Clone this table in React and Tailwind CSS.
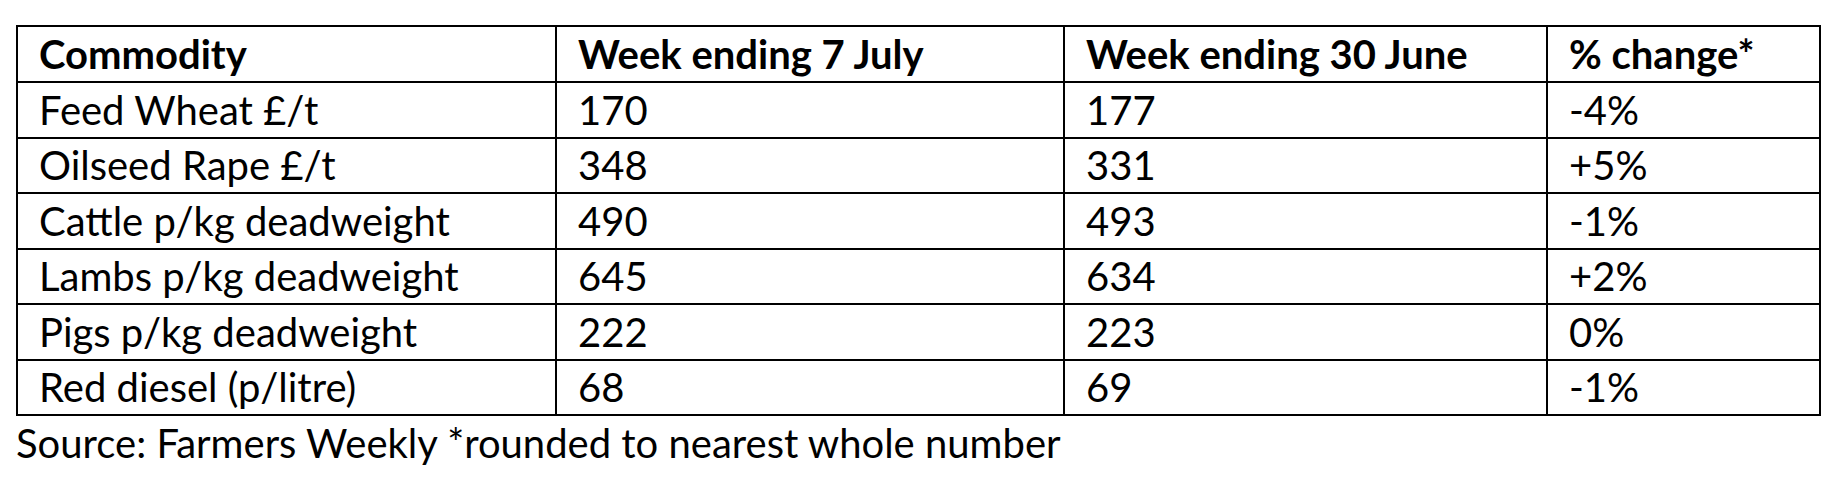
import React from "react";

const rows = [
  ["Feed Wheat £/t", "170", "177", "-4%"],
  ["Oilseed Rape £/t", "348", "331", "+5%"],
  ["Cattle p/kg deadweight", "490", "493", "-1%"],
  ["Lambs p/kg deadweight", "645", "634", "+2%"],
  ["Pigs p/kg deadweight", "222", "223", "0%"],
  ["Red diesel (p/litre)", "68", "69", "-1%"],
];

const headers = ["Commodity", "Week ending 7 July", "Week ending 30 June", "% change*"];

export default function App() {
  return (
    <div
      className="w-[1833px] h-[489px] bg-white text-black"
      style={{ fontFamily: "Lato, 'Open Sans', sans-serif" }}
    >
      <div className="pt-[25px] pl-[16px]">
        <table className="table-fixed border-collapse w-[1803px] text-[40px] leading-none">
          <colgroup>
            <col className="w-[539px]" />
            <col className="w-[508px]" />
            <col className="w-[483px]" />
            <col className="w-[273px]" />
          </colgroup>
          <thead>
            <tr className="h-[56px]">
              {headers.map((h) => (
                <th
                  key={h}
                  className="border-2 border-black text-left font-bold pl-[21px] align-middle whitespace-nowrap"
                >
                  {h}
                </th>
              ))}
            </tr>
          </thead>
          <tbody>
            {rows.map((r) => (
              <tr key={r[0]} className="h-[55.5px]">
                {r.map((c, i) => (
                  <td
                    key={i}
                    className="border-2 border-black pl-[21px] align-middle whitespace-nowrap"
                  >
                    {c}
                  </td>
                ))}
              </tr>
            ))}
          </tbody>
        </table>
        <p className="text-[40px] leading-none mt-[7px] whitespace-nowrap">
          Source: Farmers Weekly *rounded to nearest whole number
        </p>
      </div>
    </div>
  );
}
